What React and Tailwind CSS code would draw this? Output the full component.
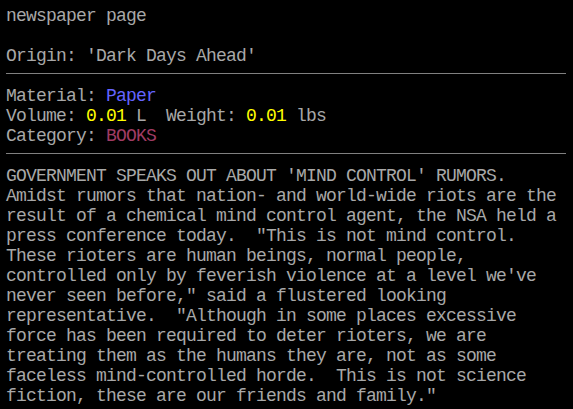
import React from 'react';

const body = [
    "GOVERNMENT SPEAKS OUT ABOUT 'MIND CONTROL' RUMORS.",
    'Amidst rumors that nation- and world-wide riots are the',
    'result of a chemical mind control agent, the NSA held a',
    'press conference today.  "This is not mind control.',
    'These rioters are human beings, normal people,',
    "controlled only by feverish violence at a level we've",
    'never seen before," said a flustered looking',
    'representative.  "Although in some places excessive',
    'force has been required to deter rioters, we are',
    'treating them as the humans they are, not as some',
    'faceless mind-controlled horde.  This is not science',
    'fiction, these are our friends and family."',
];

const Line = ({ children }) => <div className="h-5 whitespace-pre">{children}</div>;

const Separator = () => (
    <div className="h-5 pt-[7px] mr-[7px]">
        <div className="h-px bg-[#808080]" />
    </div>
);

const App = () => {
    return (
        <div className="w-[573px] h-[409px] bg-black overflow-hidden pt-[6px] pl-[6px] text-[#a8a8a8] font-['Liberation_Mono',monospace] text-[18px] leading-5 tracking-[-0.8px]">
            <Line>newspaper page</Line>
            <Line> </Line>
            <Line>Origin: 'Dark Days Ahead'</Line>
            <Separator />
            <Line>
                Material: <span className="text-[#6464ff]">Paper</span>
            </Line>
            <Line>
                Volume: <span className="text-[#ffff00]">0.01</span> L  Weight: <span className="text-[#ffff00]">0.01</span> lbs
            </Line>
            <Line>
                Category: <span className="text-[#a03c64]">BOOKS</span>
            </Line>
            <Separator />
            {body.map((text, i) => (
                <Line key={i}>{text}</Line>
            ))}
        </div>
    );
};

export default App;
